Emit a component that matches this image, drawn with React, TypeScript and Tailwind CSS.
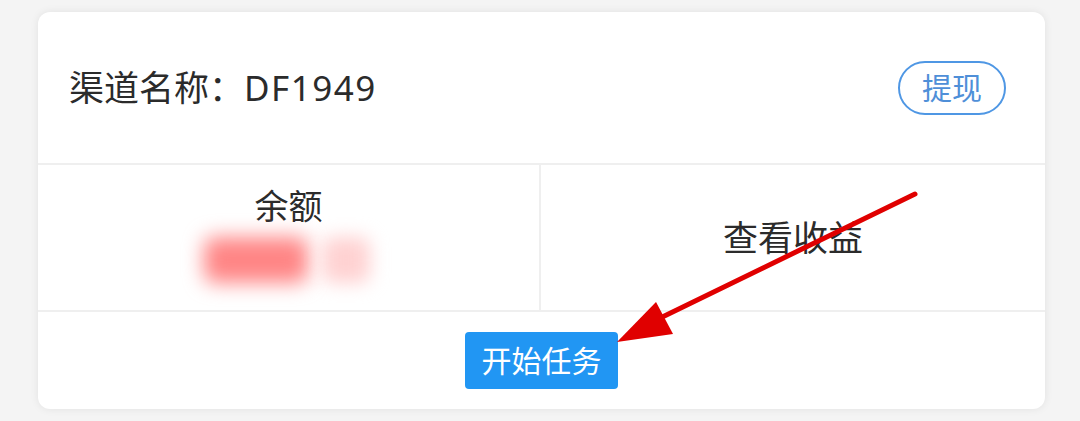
const font = { fontFamily: "'Noto Sans', 'Noto Sans CJK SC', sans-serif" };

const Arrow = () => (
  <svg
    className="pointer-events-none absolute left-0 top-0"
    width="1080"
    height="421"
    viewBox="0 0 1080 421">
    <line x1="915" y1="194" x2="650" y2="323" stroke="#e00000" strokeWidth="5" strokeLinecap="round" />
    <polygon points="617,342 656,302 673,334" fill="#e00000" />
  </svg>
);

export default function App() {
  return (
    <div
      className="relative h-[421px] w-[1080px] overflow-hidden bg-[#f4f4f4] pl-[38px] pt-[12px]"
      style={font}>
      <div className="w-[1007px] overflow-hidden rounded-[12px] bg-white text-[#2b2b2b] shadow-[0_0_8px_rgba(0,0,0,0.08)]">
        {/* header */}
        <div className="flex h-[153px] items-center justify-between border-b-2 border-[#efefef] pl-[31px] pr-[39px]">
          <span className="text-[35px] leading-none">
            渠道名称：<span className="tracking-[1.5px]">DF1949</span>
          </span>
          <button className="flex h-[54px] w-[108px] items-center justify-center rounded-full border-2 border-[#4f97e4] text-[30px] leading-none text-[#4f8fd8]">
            提现
          </button>
        </div>

        {/* balance / earnings */}
        <div className="grid h-[147px] grid-cols-[503px_1fr] border-b-2 border-[#efefef]">
          <div className="flex flex-col items-center border-r-2 border-[#efefef] pt-[24px]">
            <span className="text-[34px] leading-none">余额</span>
            <div className="mt-[14px] flex items-center gap-[14px] pr-[4px]">
              <div className="h-[46px] w-[104px] rounded-[10px] bg-[#ff8585] blur-[10px]" />
              <div className="h-[46px] w-[48px] rounded-[10px] bg-[#ffd2d2] blur-[9px]" />
            </div>
          </div>
          <div className="flex items-center justify-center">
            <span className="text-[35px] leading-none">查看收益</span>
          </div>
        </div>

        {/* start task */}
        <div className="flex h-[97px] items-center justify-center">
          <button className="flex h-[57px] w-[153px] items-center justify-center rounded-[4px] bg-[#2196f3] text-[30px] leading-none text-white">
            开始任务
          </button>
        </div>
      </div>
      <Arrow />
    </div>
  );
}
